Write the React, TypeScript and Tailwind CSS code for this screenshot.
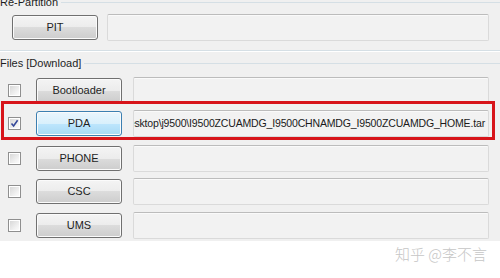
import React from "react";

type Row = { label: string; checked?: boolean; value?: string; mt: string; active?: boolean };

const ROWS: Row[] = [
  { label: "Bootloader", mt: "mt-[7px]" },
  {
    label: "PDA",
    checked: true,
    active: true,
    value: "Desktop\\j9500\\I9500ZCUAMDG_I9500CHNAMDG_I9500ZCUAMDG_HOME.tar",
    mt: "mt-[6px]",
  },
  { label: "PHONE", mt: "mt-[8px]" },
  { label: "CSC", mt: "mt-[6px]" },
  { label: "UMS", mt: "mt-[7px]" },
];

function CheckBox({ checked }: { checked?: boolean }) {
  return (
    <div className="flex size-[13px] shrink-0 items-center justify-center border border-[#8f8f8f] bg-white">
      <div className="relative size-[9px] bg-[linear-gradient(135deg,#d8d8d8_0%,#f2f2f2_70%,#fbfbfb_100%)]">
        {checked && (
          <svg viewBox="0 0 9 9" className="absolute inset-0 size-[9px]">
            <path d="M1.5 4.5 L3.6 7 L7.6 1.2" fill="none" stroke="#34489a" strokeWidth="1.6" />
          </svg>
        )}
      </div>
    </div>
  );
}

function WinButton({ label, active, className }: { label: string; active?: boolean; className?: string }) {
  return (
    <div
      className={
        "flex h-[25px] w-[86px] shrink-0 items-center justify-center rounded-[3px] border text-[11px] text-[#1e1e1e] shadow-[inset_0_0_0_1px_#fbfbfb] " +
        (active
          ? "border-[#3c7fb1] bg-[linear-gradient(to_bottom,#eaf6fd_0%,#d9f0fc_50%,#bee6fd_50%,#a7d9f5_100%)] "
          : "border-[#707070] bg-[linear-gradient(to_bottom,#f4f4f4_0%,#ececec_50%,#dcdcdc_50%,#cdcdcd_100%)] ") +
        (className ?? "")
      }
    >
      {label}
    </div>
  );
}

function Field({ value, className }: { value?: string; className?: string }) {
  return (
    <div
      className={
        "flex h-[27px] items-center justify-end overflow-hidden rounded-[2px] border border-[#dadada] border-t-[#bcbcbc] bg-[#f2f2f2] pr-[3px] shadow-[inset_0_1px_0_#fafafa] " +
        (className ?? "")
      }
    >
      {value && (
        <span className="whitespace-nowrap text-[10.5px] tracking-[-0.16px] text-[#1a1a1a]">{value}</span>
      )}
    </div>
  );
}

export default function App() {
  return (
    <div className="h-[278px] w-[500px] overflow-hidden bg-white font-['Liberation_Sans',Arial,sans-serif]">
      <div className="h-[245px] bg-[#f0f0f0]">
        {/* Re-Partition group */}
        <div className="-mt-[4px] flex h-[13px] items-center">
          <span className="text-[11px] leading-[13px] text-[#1e1e1e]">Re-Partition</span>
          <div className="ml-[3px] h-px flex-1 bg-[#d5dfe5]" />
        </div>
        <div className="mt-[5px] flex h-[27px] items-center pl-[12px]">
          <WinButton label="PIT" />
          <Field className="ml-[9px] w-[382px]" />
        </div>
        <div className="mt-[9px] h-[2px] border-t border-b border-t-[#d5dfe5] border-b-white" />

        {/* Files group */}
        <div className="mt-[5px] flex h-[13px] items-center">
          <span className="text-[11px] leading-[13px] text-[#1e1e1e]">Files [Download]</span>
          <div className="ml-[3px] h-px flex-1 bg-[#d5dfe5]" />
        </div>

        {ROWS.map((r) => (
          <div key={r.label} className={"relative flex h-[27px] items-center pl-[8px] " + r.mt}>
            <CheckBox checked={r.checked} />
            <WinButton label={r.label} active={r.active} className="ml-[15px]" />
            <Field value={r.value} className="ml-[11px] w-[356px]" />
            {r.active && (
              <div className="pointer-events-none absolute -top-[9px] left-[1px] h-[39px] w-[494px] border-[3px] border-[#d7141a]" />
            )}
          </div>
        ))}
      </div>

      <div className="mt-[4px] flex justify-end pr-[13px]">
        <span className="text-[15px] font-light leading-[18px] text-[#c6c6c6] font-['Noto_Sans_CJK_SC',sans-serif]">
          知乎 @李不言
        </span>
      </div>
    </div>
  );
}
